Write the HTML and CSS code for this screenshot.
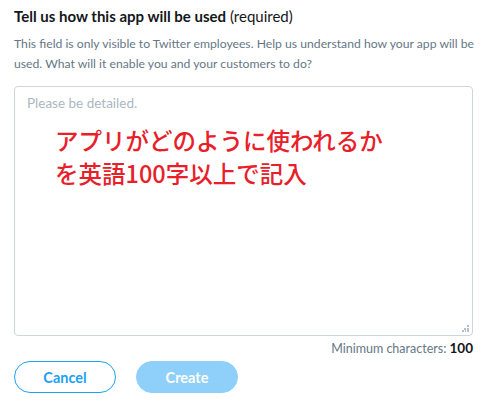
FILE: index.html
```html
<!DOCTYPE html>
<html>
<head>
<meta charset="utf-8">
<link rel="stylesheet" href="styles.css">
</head>
<body>
<div class="form">
  <div class="label"><span class="label-strong">Tell us how this app will be used</span> (required)</div>
  <p class="help">This field is only visible to Twitter employees. Help us understand how your app will be used. What will it enable you and your customers to do?</p>
  <div class="textarea">
    <div class="placeholder">Please be detailed.</div>
    <div class="note">アプリがどのように使われるか<br>を英語100字以上で記入</div>
    <svg class="grip" width="7" height="7" viewBox="0 0 7 7"><g fill="#b8bec6"><rect x="5" y="0" width="2" height="2"/><rect x="2" y="3" width="2" height="2"/><rect x="5" y="3" width="2" height="2"/><rect x="0" y="5" width="2" height="2"/><rect x="3" y="5" width="1" height="2"/><rect x="5" y="5" width="2" height="2"/></g></svg>
  </div>
  <div class="counter">Minimum characters: <b>100</b></div>
  <div class="actions">
    <button class="btn btn-outline">Cancel</button>
    <button class="btn btn-disabled">Create</button>
  </div>
</div>
</body>
</html>
```
FILE: styles.css
```css
html, body { margin: 0; padding: 0; background: #fff; }
body { font-family: "Lato", "Open Sans", sans-serif; color: #14171a; }
.form { padding: 6px 22px 0 14px; }
.label { font-size: 15px; line-height: 20px; color: #14171a; }
.label-strong { font-weight: 700; }
.help { margin: 8px -20px 0 0; font-size: 12.2px; line-height: 20px; color: #657786; }
.textarea {
  position: relative;
  margin-top: 12px;
  height: 250px;
  border: 1px solid #ccd6dd;
  border-radius: 4px;
  padding: 7px 12px;
  box-sizing: border-box;
}
.placeholder { font-size: 13.5px; line-height: 18px; color: #aab8c2; }
.note {
  margin: 12px 0 0 28px;
  font-family: "Noto Sans CJK JP", sans-serif;
  font-size: 23.5px; line-height: 33px; font-weight: 500;
  color: #e8202a;
}
.grip { position: absolute; right: 3px; bottom: 3px; }
.counter { text-align: right; font-size: 12.5px; line-height: 18px; color: #657786; margin-top: 3px; }
.counter b { color: #14171a; font-size: 13.5px; }
.actions { display: flex; gap: 20px; margin-top: 3px; }
.btn {
  width: 102px; height: 32px; border-radius: 16px;
  font-family: inherit; font-size: 14.5px; font-weight: 700;
  box-sizing: border-box; padding: 0;
}
.btn-outline { background: #fff; border: 1px solid #1da1f2; color: #1da1f2; }
.btn-disabled { background: #8ed0f9; border: 1px solid #8ed0f9; color: #fff; }
```
